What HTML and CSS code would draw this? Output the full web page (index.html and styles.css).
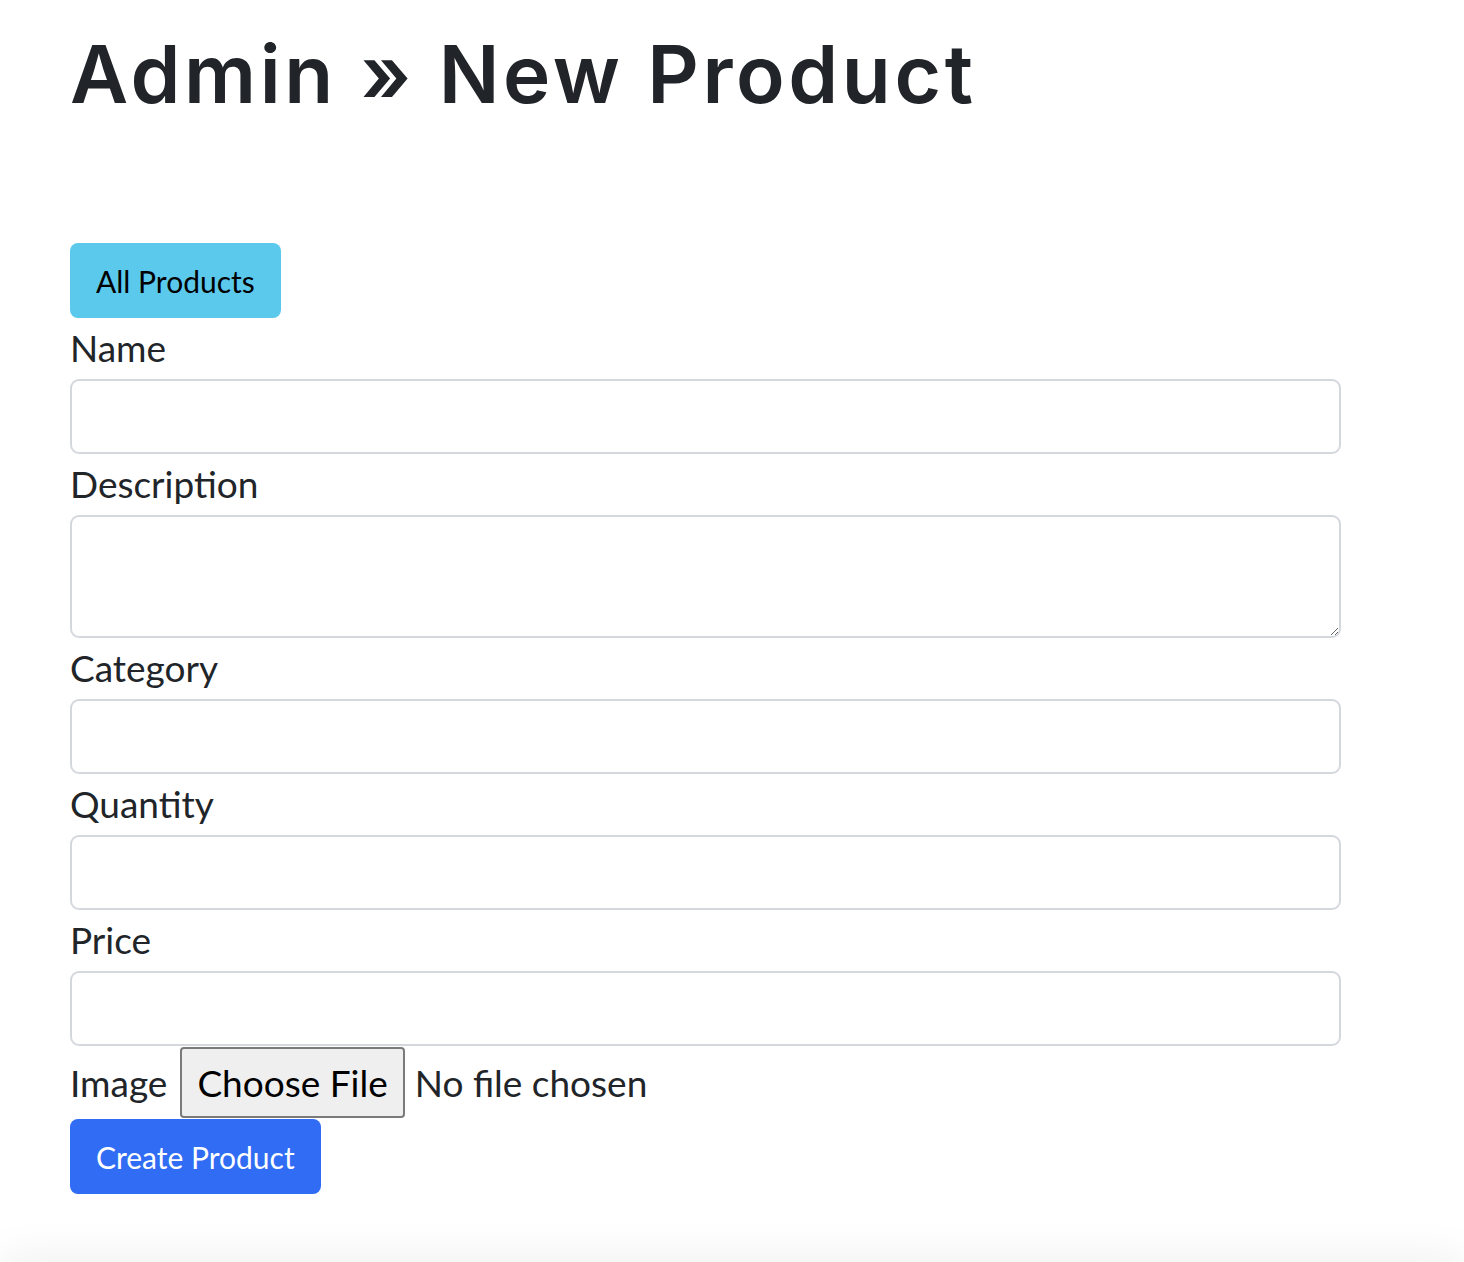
FILE: index.html
```html
<!DOCTYPE html>
<html lang="en">
<head>
<meta charset="utf-8">
<title>Admin » New Product</title>
<link rel="stylesheet" href="styles.css">
</head>
<body>
<main class="page">
  <h1 class="title">Admin » New Product</h1>
  <a class="btn btn-info" href="#">All Products</a>
  <form class="form">
    <label class="form-label" for="name">Name</label>
    <input class="form-control" id="name" type="text">
    <label class="form-label" for="description">Description</label>
    <textarea class="form-control form-textarea" id="description"></textarea>
    <label class="form-label" for="category">Category</label>
    <input class="form-control" id="category" type="text">
    <label class="form-label" for="quantity">Quantity</label>
    <input class="form-control" id="quantity" type="text">
    <label class="form-label" for="price">Price</label>
    <input class="form-control" id="price" type="text">
    <div class="file-row">
      <label class="file-label" for="image">Image</label>
      <input class="file-input" id="image" type="file">
    </div>
    <button class="btn btn-primary" type="button">Create Product</button>
  </form>
</main>
<footer class="footer"></footer>
</body>
</html>
```
FILE: styles.css
```css
html, body {
  margin: 0;
  padding: 0;
  background: #ffffff;
}
body {
  font-family: Lato, "Noto Sans", sans-serif;
  color: #212529;
  overflow: hidden;
}
.page {
  padding-left: 70px;
  width: 1271px;
}
.title {
  font-family: Inter, "Noto Sans", sans-serif;
  font-weight: 600;
  font-size: 80px;
  line-height: 96px;
  margin: 26px 0 121px;
  letter-spacing: 3.6px;
}
.btn {
  display: inline-flex;
  align-items: center;
  justify-content: center;
  box-sizing: border-box;
  height: 75px;
  padding: 0 26px;
  border: 0;
  border-radius: 8px;
  font-family: Lato, "Noto Sans", sans-serif;
  font-size: 30px;
  text-decoration: none;
}
.btn-info {
  background: #5bc9ec;
  color: #000000;
}
.btn-primary {
  background: #316cf4;
  color: #ffffff;
}
.form {
  display: flex;
  flex-direction: column;
  align-items: flex-start;
}
.form-label {
  display: block;
  font-size: 37px;
  line-height: 48px;
  margin: 6px 0 7px;
}
.form-control {
  display: block;
  box-sizing: border-box;
  width: 1271px;
  height: 75px;
  border: 2px solid #d4d8dd;
  border-radius: 9px;
  background: #fff;
  font-family: inherit;
  font-size: 30px;
  padding: 0 20px;
  margin: 0;
}
.form-textarea {
  height: 123px;
  resize: vertical;
}
.file-row {
  display: flex;
  align-items: center;
  height: 73px;
  font-size: 37px;
}
.file-label {
  margin-right: 13px;
}
.file-input {
  font-family: inherit;
  font-size: 37px;
  color: #212529;
}
.file-input::file-selector-button {
  font-family: inherit;
  font-size: 37px;
  height: 71px;
  padding: 0 15px;
  margin-right: 10px;
  background: #efefef;
  color: #000;
  border: 2px solid #7a7a7a;
  border-radius: 4px;
}
.footer {
  margin-top: 68px;
  height: 40px;
  box-shadow: 0 -8px 40px rgba(0, 0, 0, 0.06);
}
```
